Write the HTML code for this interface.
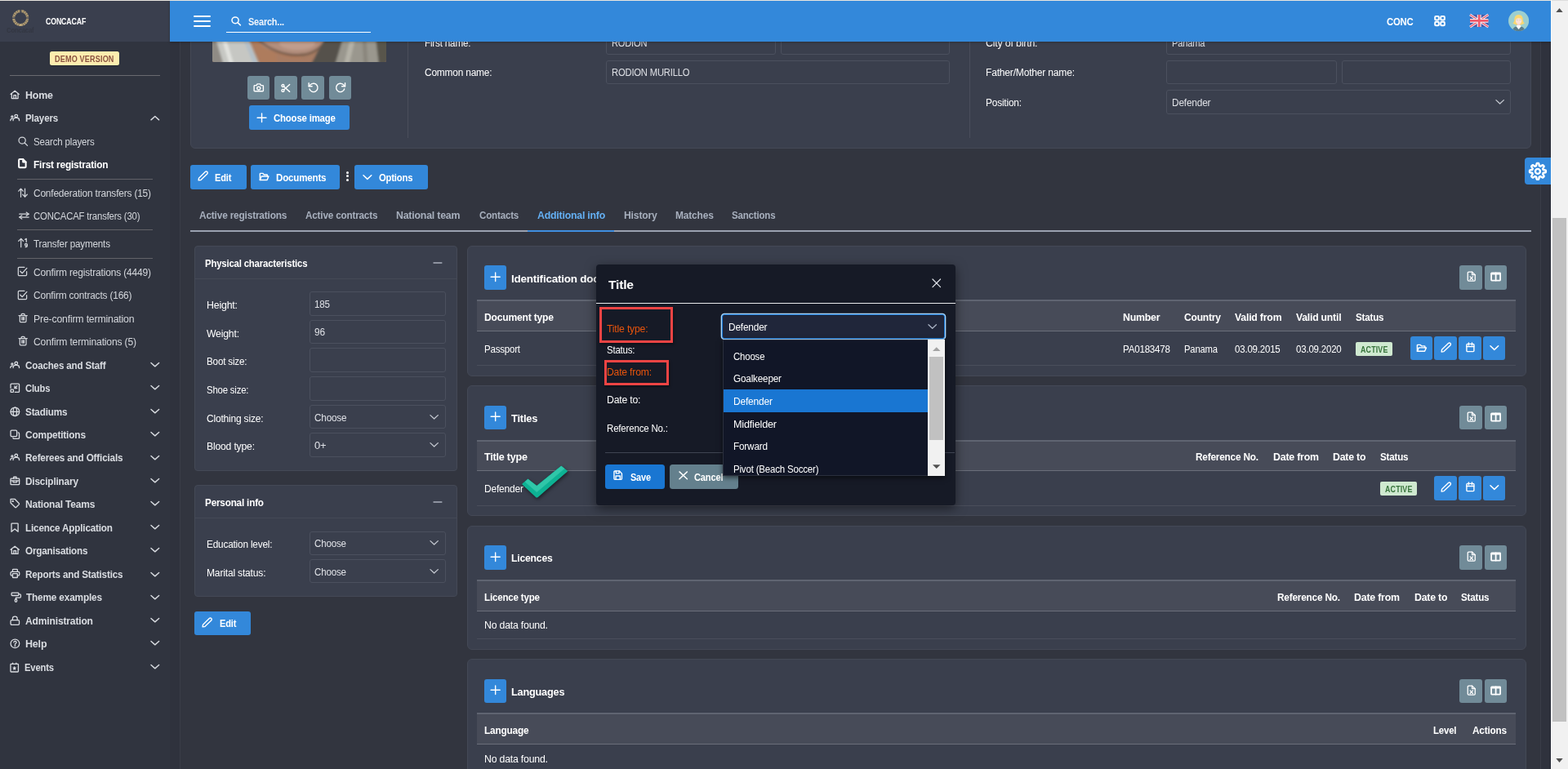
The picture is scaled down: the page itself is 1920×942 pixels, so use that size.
<!DOCTYPE html>
<html lang="en"><head><meta charset="utf-8"><title>COMET - Player</title>
<style>
html,body{margin:0;padding:0}
body{width:1920px;height:942px;overflow:hidden;position:relative;background:#32353f;font-family:"Liberation Sans",sans-serif;letter-spacing:-0.2px}
.b,.t,.i{position:absolute;display:block}
.b{box-sizing:border-box}
.t{white-space:pre;transform-origin:0 50%;margin:0;font-weight:400}
.i{overflow:visible}
.ns *{vector-effect:non-scaling-stroke}
</style></head>
<body>
<div class="b" style="left:0px;top:0px;width:1899px;height:942px;background:#32353f;">
</div>
<div class="b" style="left:208px;top:51px;width:12px;height:891px;background:#2f323d;">
</div>
<div class="b" style="left:220px;top:51px;width:1px;height:891px;background:#3a3d48;">
</div>
<div class="b" style="left:1886px;top:51px;width:1px;height:891px;background:#3a3d48;">
</div>
<div class="b" style="left:1887px;top:51px;width:12px;height:891px;background:#2f323d;">
</div>
<div class="b" style="left:1898px;top:51px;width:1px;height:891px;background:#262a36;">
</div>
<section>
<div class="b" style="left:233px;top:30px;width:1642px;height:152px;background:#3a3f4d;border-radius:6px;border:1px solid #444956;">
</div>
<svg class="i" style="left:260px;top:51px;border-radius:0 0 2px 2px;overflow:hidden" width="213" height="25" viewBox="0 0 213 25">
<defs>
<filter id="pb" x="-10%" y="-30%" width="120%" height="160%">
<feGaussianBlur stdDeviation="1.600"/>
</filter>
</defs>
<rect width="213" height="25" fill="#a67b61"/>
<g filter="url(#pb)">
<path d="M-4 -4H44L58 29H-4z" fill="#c6c7c3"/>
<path d="M-4 -4H4L14 29H-4z" fill="#8f8b85"/>
<path d="M14 -4l10 33" stroke="#e2e3df" stroke-width="5"/>
<path d="M40 -4l14 33" stroke="#b3bfc8" stroke-width="5"/>
<path d="M46 -4H80L120 29H60z" fill="#ae7b5d"/>
<ellipse cx="100" cy="-3" rx="43" ry="18" fill="#b28e7d"/>
<ellipse cx="104" cy="2" rx="22" ry="8" fill="#c09d8d"/>
<path d="M57 -2C70 10 88 17 105 16.500S130 10 140 -2" fill="none" stroke="#6f5748" stroke-width="3" opacity=".85"/>
<path d="M78 14C90 22 110 24 128 16L126 29H80z" fill="#a87c64"/>
<path d="M138 -4H166L152 29H120z" fill="#55514c"/>
<path d="M160 -4H200L206 29H150z" fill="#9a978e"/>
<path d="M172 -4l-8 33" stroke="#b5b2a8" stroke-width="6"/>
<path d="M186 -4l2 33" stroke="#8a867d" stroke-width="5"/>
<path d="M200 -4H218V29H204z" fill="#59544c"/>
</g>
</svg>
<div class="b" style="left:303px;top:93px;width:27px;height:29px;background:#718b98;border-radius:3px;">
</div>
<svg class="i ns" style="left:310.27px;top:101.27px;color:#fff;" width="13.56" height="12.56" viewBox="0 0 24 24" preserveAspectRatio="none" fill="none" stroke="#fff" stroke-width="1.4" stroke-linecap="round" stroke-linejoin="round">
<path d="M2 8.500A1.500 1.500 0 0 1 3.500 7h3.500l2-3.500h6L17 7h3.500A1.500 1.500 0 0 1 22 8.500V19a1.500 1.500 0 0 1-1.500 1.500h-17A1.500 1.500 0 0 1 2 19z"/>
<circle cx="12" cy="13.500" r="3.600"/>
</svg>
<div class="b" style="left:336px;top:93px;width:28px;height:29px;background:#718b98;border-radius:3px;">
</div>
<svg class="i ns" style="left:343.63px;top:101.62px;color:#fff;" width="11.64" height="11.87" viewBox="0 0 24 24" preserveAspectRatio="none" fill="none" stroke="#fff" stroke-width="1.4" stroke-linecap="round" stroke-linejoin="round">
<circle cx="5" cy="6" r="3"/>
<circle cx="5" cy="18" r="3"/>
<path d="M7.500 8 22 21"/>
<path d="M7.500 16 22 3"/>
</svg>
<div class="b" style="left:369px;top:93px;width:28px;height:29px;background:#718b98;border-radius:3px;">
</div>
<svg class="i ns" style="left:376.96px;top:100.16px;color:#fff;" width="13.7" height="13.9" viewBox="0 0 24 24" preserveAspectRatio="none" fill="none" stroke="#fff" stroke-width="1.4" stroke-linecap="round" stroke-linejoin="round">
<path d="M2 3v7h7"/>
<path d="M3.500 15.500A9 9 0 1 0 6 6.200L2 10"/>
</svg>
<div class="b" style="left:403px;top:93px;width:27px;height:29px;background:#718b98;border-radius:3px;">
</div>
<svg class="i ns" style="left:409.94px;top:100.16px;color:#fff;" width="13.7" height="13.9" viewBox="0 0 24 24" preserveAspectRatio="none" fill="none" stroke="#fff" stroke-width="1.4" stroke-linecap="round" stroke-linejoin="round">
<path d="M22 3v7h-7"/>
<path d="M20.500 15.500A9 9 0 1 1 18 6.200L22 10"/>
</svg>
<div class="b" style="left:305px;top:129px;width:123px;height:30px;background:#3388da;border-radius:3px;">
</div>
<svg class="i ns" style="left:314.11px;top:137.55px;color:#fff;" width="13.08" height="12.6" viewBox="0 0 24 24" preserveAspectRatio="none" fill="none" stroke="#fff" stroke-width="1.4" stroke-linecap="round" stroke-linejoin="round">
<path d="M12 2v20"/>
<path d="M2 12h20"/>
</svg>
<span class="t" style="left:334.8px;top:137px;font-size:12.5px;line-height:16px;color:#fff;transform:scaleX(0.9118);font-weight:700;">Choose image</span>
<div class="b" style="left:499px;top:51px;width:1px;height:117.5px;background:#4a4e5b;">
</div>
<div class="b" style="left:1187px;top:51px;width:1px;height:117.5px;background:#4a4e5b;">
</div>
<span class="t" style="left:519.8px;top:45px;font-size:12.5px;line-height:16px;color:#fff;transform:scaleX(0.9339);">First name:</span>
<div class="b" style="left:742px;top:37px;width:208px;height:30px;border-radius:3px;border:1px solid #4b505e;">
</div>
<span class="t" style="left:748.7px;top:45px;font-size:12.5px;line-height:16px;color:#dfe1e6;transform:scaleX(0.8873);">RODION</span>
<div class="b" style="left:956px;top:37px;width:207px;height:30px;border-radius:3px;border:1px solid #4b505e;">
</div>
<span class="t" style="left:519.8px;top:81px;font-size:12.5px;line-height:16px;color:#fff;transform:scaleX(0.9515);">Common name:</span>
<div class="b" style="left:742px;top:74px;width:421px;height:29px;border-radius:3px;border:1px solid #4b505e;">
</div>
<span class="t" style="left:748.7px;top:81px;font-size:12.5px;line-height:16px;color:#dfe1e6;transform:scaleX(0.8971);">RODION MURILLO</span>
<span class="t" style="left:1206.8px;top:45px;font-size:12.5px;line-height:16px;color:#fff;transform:scaleX(0.9915);">City of birth:</span>
<div class="b" style="left:1428px;top:37px;width:422px;height:30px;border-radius:3px;border:1px solid #4b505e;">
</div>
<span class="t" style="left:1434.7px;top:45px;font-size:12.5px;line-height:16px;color:#dfe1e6;transform:scaleX(0.8887);">Panama</span>
<span class="t" style="left:1206.8px;top:81px;font-size:12.5px;line-height:16px;color:#fff;transform:scaleX(0.9638);">Father/Mother name:</span>
<div class="b" style="left:1428px;top:74px;width:208.5px;height:29px;border-radius:3px;border:1px solid #4b505e;">
</div>
<div class="b" style="left:1643px;top:74px;width:207px;height:29px;border-radius:3px;border:1px solid #4b505e;">
</div>
<span class="t" style="left:1206.8px;top:118px;font-size:12.5px;line-height:16px;color:#fff;transform:scaleX(0.9497);">Position:</span>
<div class="b" style="left:1428px;top:110px;width:422px;height:30px;border-radius:3px;border:1px solid #4b505e;">
</div>
<span class="t" style="left:1434.7px;top:118px;font-size:12.5px;line-height:16px;color:#dfe1e6;transform:scaleX(0.9499);">Defender</span>
<svg class="i ns" style="left:1830.81px;top:120.11px;color:#c4c8d0;" width="11.28" height="10.56" viewBox="0 0 24 24" preserveAspectRatio="none" fill="none" stroke="#c4c8d0" stroke-width="1.3" stroke-linecap="round" stroke-linejoin="round">
<path d="M2 6l10 10L22 6"/>
</svg>
</section>
<div class="b" style="left:233px;top:202px;width:69px;height:30px;background:#3388da;border-radius:3px;">
</div>
<svg class="i ns" style="left:241.89px;top:209.21px;color:#fff;" width="13.33" height="12.97" viewBox="0 0 24 24" preserveAspectRatio="none" fill="none" stroke="#fff" stroke-width="1.4" stroke-linecap="round" stroke-linejoin="round">
<path d="M16.800 2.900a3 3 0 0 1 4.300 4.300L7 21.300l-5 .7.700-5z"/>
</svg>
<span class="t" style="left:263.3px;top:210px;font-size:12.5px;line-height:16px;color:#fff;transform:scaleX(0.8859);font-weight:700;">Edit</span>
<div class="b" style="left:307px;top:202px;width:109px;height:30px;background:#3388da;border-radius:3px;">
</div>
<svg class="i ns" style="left:316.78px;top:210.63px;color:#fff;" width="12.72" height="10.93" viewBox="0 0 24 24" preserveAspectRatio="none" fill="none" stroke="#fff" stroke-width="1.4" stroke-linecap="round" stroke-linejoin="round">
<path d="M2.500 21V4a1 1 0 0 1 1-1h5.500l3 3.500h6.500a1 1 0 0 1 1 1V11"/>
<path d="M2.500 21 6 11h16.500L19 21z"/>
</svg>
<span class="t" style="left:337.8px;top:210px;font-size:12.5px;line-height:16px;color:#fff;transform:scaleX(0.9252);font-weight:700;">Documents</span>
<div class="b" style="left:424px;top:209.5px;width:3px;height:3px;background:#fff;border-radius:2px;">
</div>
<div class="b" style="left:424px;top:214.2px;width:3px;height:3px;background:#fff;border-radius:2px;">
</div>
<div class="b" style="left:424px;top:218.9px;width:3px;height:3px;background:#fff;border-radius:2px;">
</div>
<div class="b" style="left:434px;top:202px;width:90px;height:30px;background:#3388da;border-radius:3px;">
</div>
<svg class="i ns" style="left:443.87px;top:211.69px;color:#fff;" width="11.76" height="11.04" viewBox="0 0 24 24" preserveAspectRatio="none" fill="none" stroke="#fff" stroke-width="1.5" stroke-linecap="round" stroke-linejoin="round">
<path d="M2 6l10 10L22 6"/>
</svg>
<span class="t" style="left:464px;top:210px;font-size:12.5px;line-height:16px;color:#fff;transform:scaleX(0.9015);font-weight:700;">Options</span>
<span class="t" style="left:244.1px;top:256px;font-size:12.5px;line-height:16px;color:#a7afbd;transform:scaleX(0.9513);font-weight:700;">Active registrations</span>
<span class="t" style="left:374.1px;top:256px;font-size:12.5px;line-height:16px;color:#a7afbd;transform:scaleX(0.9380);font-weight:700;">Active contracts</span>
<span class="t" style="left:485.3px;top:256px;font-size:12.5px;line-height:16px;color:#a7afbd;transform:scaleX(0.9858);font-weight:700;">National team</span>
<span class="t" style="left:586.8px;top:256px;font-size:12.5px;line-height:16px;color:#a7afbd;transform:scaleX(0.9274);font-weight:700;">Contacts</span>
<span class="t" style="left:657.6px;top:256px;font-size:12.5px;line-height:16px;color:#64b0f4;transform:scaleX(0.9830);font-weight:700;">Additional info</span>
<span class="t" style="left:763.6px;top:256px;font-size:12.5px;line-height:16px;color:#a7afbd;transform:scaleX(0.9753);font-weight:700;">History</span>
<span class="t" style="left:827.3px;top:256px;font-size:12.5px;line-height:16px;color:#a7afbd;transform:scaleX(0.9591);font-weight:700;">Matches</span>
<span class="t" style="left:896.4px;top:256px;font-size:12.5px;line-height:16px;color:#a7afbd;transform:scaleX(0.9221);font-weight:700;">Sanctions</span>
<div class="b" style="left:233px;top:282px;width:1642px;height:2px;background:#9aa1b0;">
</div>
<div class="b" style="left:646px;top:282px;width:105.5px;height:2px;background:#3f8fe0;">
</div>
<div class="b" style="left:1867px;top:193px;width:32px;height:33px;background:#3388da;border-radius:4px 0 0 4px;">
</div>
<svg class="i ns" style="left:1871.41px;top:197.52px;color:#fff;" width="23.88" height="23.76" viewBox="0 0 24 24" preserveAspectRatio="none" fill="none" stroke="#fff" stroke-width="2.4" stroke-linecap="round" stroke-linejoin="round">
<path d="M12.00 2.00L12.39 2.01L12.78 2.03L13.16 2.16L13.45 2.87L13.66 3.66L13.81 4.46L13.92 5.18L14.16 5.34L14.42 5.43L14.68 5.53L14.93 5.64L15.18 5.76L15.46 5.81L16.05 5.38L16.72 4.93L17.43 4.52L18.14 4.22L18.49 4.40L18.79 4.66L19.07 4.93L19.34 5.21L19.60 5.51L19.78 5.86L19.48 6.57L19.07 7.28L18.62 7.95L18.19 8.54L18.24 8.82L18.36 9.07L18.47 9.32L18.57 9.58L18.66 9.84L18.82 10.08L19.54 10.19L20.34 10.34L21.13 10.55L21.84 10.84L21.97 11.22L21.99 11.61L22.00 12.00L21.99 12.39L21.97 12.78L21.84 13.16L21.13 13.45L20.34 13.66L19.54 13.81L18.82 13.92L18.66 14.16L18.57 14.42L18.47 14.68L18.36 14.93L18.24 15.18L18.19 15.46L18.62 16.05L19.07 16.72L19.48 17.43L19.78 18.14L19.60 18.49L19.34 18.79L19.07 19.07L18.79 19.34L18.49 19.60L18.14 19.78L17.43 19.48L16.72 19.07L16.05 18.62L15.46 18.19L15.18 18.24L14.93 18.36L14.68 18.47L14.42 18.57L14.16 18.66L13.92 18.82L13.81 19.54L13.66 20.34L13.45 21.13L13.16 21.84L12.78 21.97L12.39 21.99L12.00 22.00L11.61 21.99L11.22 21.97L10.84 21.84L10.55 21.13L10.34 20.34L10.19 19.54L10.08 18.82L9.84 18.66L9.58 18.57L9.32 18.47L9.07 18.36L8.82 18.24L8.54 18.19L7.95 18.62L7.28 19.07L6.57 19.48L5.86 19.78L5.51 19.60L5.21 19.34L4.93 19.07L4.66 18.79L4.40 18.49L4.22 18.14L4.52 17.43L4.93 16.72L5.38 16.05L5.81 15.46L5.76 15.18L5.64 14.93L5.53 14.68L5.43 14.42L5.34 14.16L5.18 13.92L4.46 13.81L3.66 13.66L2.87 13.45L2.16 13.16L2.03 12.78L2.01 12.39L2.00 12.00L2.01 11.61L2.03 11.22L2.16 10.84L2.87 10.55L3.66 10.34L4.46 10.19L5.18 10.08L5.34 9.84L5.43 9.58L5.53 9.32L5.64 9.07L5.76 8.82L5.81 8.54L5.38 7.95L4.93 7.28L4.52 6.57L4.22 5.86L4.40 5.51L4.66 5.21L4.93 4.93L5.21 4.66L5.51 4.40L5.86 4.22L6.57 4.52L7.28 4.93L7.95 5.38L8.54 5.81L8.82 5.76L9.07 5.64L9.32 5.53L9.58 5.43L9.84 5.34L10.08 5.18L10.19 4.46L10.34 3.66L10.55 2.87L10.84 2.16L11.22 2.03L11.61 2.01z"/>
<circle cx="12" cy="12" r="3"/>
</svg>
<section>
<div class="b" style="left:238px;top:301px;width:322px;height:275.5px;background:#3a3f4d;border-radius:4px;border:1px solid #444956;">
</div>
<div class="b" style="left:239px;top:341px;width:320px;height:1px;background:#444956;">
</div>
<span class="t" style="left:251.1px;top:315px;font-size:12.5px;line-height:16px;color:#fff;transform:scaleX(0.9104);font-weight:700;">Physical characteristics</span>
<svg class="i ns" style="left:529.96px;top:310px;color:#aab0bc;" width="11.88" height="24" viewBox="0 0 24 24" preserveAspectRatio="none" fill="none" stroke="#aab0bc" stroke-width="1.3" stroke-linecap="round" stroke-linejoin="round">
<path d="M2 12h20"/>
</svg>
<span class="t" style="left:252.8px;top:366px;font-size:12.5px;line-height:16px;color:#fff;transform:scaleX(0.9903);">Height:</span>
<div class="b" style="left:378.5px;top:357px;width:167px;height:30px;border-radius:3px;border:1px solid #4b505e;">
</div>
<span class="t" style="left:385.2px;top:365px;font-size:12.5px;line-height:16px;color:#dfe1e6;transform:scaleX(0.9289);">185</span>
<span class="t" style="left:252.8px;top:401px;font-size:12.5px;line-height:16px;color:#fff;transform:scaleX(0.9773);">Weight:</span>
<div class="b" style="left:378.5px;top:392px;width:167px;height:29px;border-radius:3px;border:1px solid #4b505e;">
</div>
<span class="t" style="left:385.2px;top:399px;font-size:12.5px;line-height:16px;color:#dfe1e6;transform:scaleX(0.9494);">96</span>
<span class="t" style="left:252.8px;top:435px;font-size:12.5px;line-height:16px;color:#fff;transform:scaleX(0.9326);">Boot size:</span>
<div class="b" style="left:378.5px;top:426px;width:167px;height:30px;border-radius:3px;border:1px solid #4b505e;">
</div>
<span class="t" style="left:252.8px;top:470px;font-size:12.5px;line-height:16px;color:#fff;transform:scaleX(0.9103);">Shoe size:</span>
<div class="b" style="left:378.5px;top:461px;width:167px;height:30px;border-radius:3px;border:1px solid #4b505e;">
</div>
<span class="t" style="left:252.8px;top:505px;font-size:12.5px;line-height:16px;color:#fff;transform:scaleX(0.9597);">Clothing size:</span>
<div class="b" style="left:378.5px;top:496px;width:167px;height:29px;border-radius:3px;border:1px solid #4b505e;">
</div>
<span class="t" style="left:385.2px;top:504px;font-size:12.5px;line-height:16px;color:#dfe1e6;transform:scaleX(0.9388);">Choose</span>
<svg class="i ns" style="left:526.31px;top:505.61px;color:#c4c8d0;" width="11.28" height="10.56" viewBox="0 0 24 24" preserveAspectRatio="none" fill="none" stroke="#c4c8d0" stroke-width="1.3" stroke-linecap="round" stroke-linejoin="round">
<path d="M2 6l10 10L22 6"/>
</svg>
<span class="t" style="left:252.8px;top:539px;font-size:12.5px;line-height:16px;color:#fff;transform:scaleX(0.9751);">Blood type:</span>
<div class="b" style="left:378.5px;top:530px;width:167px;height:30px;border-radius:3px;border:1px solid #4b505e;">
</div>
<span class="t" style="left:385.2px;top:538px;font-size:12.5px;line-height:16px;color:#dfe1e6;transform:scaleX(1.0363);">0+</span>
<svg class="i ns" style="left:526.31px;top:540.11px;color:#c4c8d0;" width="11.28" height="10.56" viewBox="0 0 24 24" preserveAspectRatio="none" fill="none" stroke="#c4c8d0" stroke-width="1.3" stroke-linecap="round" stroke-linejoin="round">
<path d="M2 6l10 10L22 6"/>
</svg>
<div class="b" style="left:238px;top:594px;width:322px;height:137px;background:#3a3f4d;border-radius:4px;border:1px solid #444956;">
</div>
<div class="b" style="left:239px;top:634px;width:320px;height:1px;background:#444956;">
</div>
<span class="t" style="left:251.1px;top:608px;font-size:12.5px;line-height:16px;color:#fff;transform:scaleX(0.9378);font-weight:700;">Personal info</span>
<svg class="i ns" style="left:529.96px;top:603px;color:#aab0bc;" width="11.88" height="24" viewBox="0 0 24 24" preserveAspectRatio="none" fill="none" stroke="#aab0bc" stroke-width="1.3" stroke-linecap="round" stroke-linejoin="round">
<path d="M2 12h20"/>
</svg>
<span class="t" style="left:252.8px;top:659px;font-size:12.5px;line-height:16px;color:#fff;transform:scaleX(0.9444);">Education level:</span>
<div class="b" style="left:378.5px;top:650.5px;width:167px;height:29px;border-radius:3px;border:1px solid #4b505e;">
</div>
<span class="t" style="left:385.2px;top:658px;font-size:12.5px;line-height:16px;color:#dfe1e6;transform:scaleX(0.9268);">Choose</span>
<svg class="i ns" style="left:526.31px;top:660.11px;color:#c4c8d0;" width="11.28" height="10.56" viewBox="0 0 24 24" preserveAspectRatio="none" fill="none" stroke="#c4c8d0" stroke-width="1.3" stroke-linecap="round" stroke-linejoin="round">
<path d="M2 6l10 10L22 6"/>
</svg>
<span class="t" style="left:252.8px;top:694px;font-size:12.5px;line-height:16px;color:#fff;transform:scaleX(0.9669);">Marital status:</span>
<div class="b" style="left:378.5px;top:685px;width:167px;height:29px;border-radius:3px;border:1px solid #4b505e;">
</div>
<span class="t" style="left:385.2px;top:693px;font-size:12.5px;line-height:16px;color:#dfe1e6;transform:scaleX(0.9268);">Choose</span>
<svg class="i ns" style="left:526.31px;top:694.61px;color:#c4c8d0;" width="11.28" height="10.56" viewBox="0 0 24 24" preserveAspectRatio="none" fill="none" stroke="#c4c8d0" stroke-width="1.3" stroke-linecap="round" stroke-linejoin="round">
<path d="M2 6l10 10L22 6"/>
</svg>
<div class="b" style="left:238px;top:749px;width:69px;height:29px;background:#3388da;border-radius:3px;">
</div>
<svg class="i ns" style="left:247.39px;top:756.21px;color:#fff;" width="13.33" height="12.97" viewBox="0 0 24 24" preserveAspectRatio="none" fill="none" stroke="#fff" stroke-width="1.4" stroke-linecap="round" stroke-linejoin="round">
<path d="M16.800 2.900a3 3 0 0 1 4.300 4.300L7 21.300l-5 .7.700-5z"/>
</svg>
<span class="t" style="left:268.5px;top:756px;font-size:12.5px;line-height:16px;color:#fff;transform:scaleX(0.8859);font-weight:700;">Edit</span>
</section>
<section>
<div class="b" style="left:572px;top:301px;width:1297px;height:160px;background:#3a3f4d;border-radius:6px;border:1px solid #444956;">
</div>
<div class="b" style="left:593px;top:325px;width:27px;height:30px;background:#3388da;border-radius:3px;">
</div>
<svg class="i ns" style="left:599.89px;top:332.65px;color:#fff;" width="13.32" height="12.6" viewBox="0 0 24 24" preserveAspectRatio="none" fill="none" stroke="#fff" stroke-width="1.4" stroke-linecap="round" stroke-linejoin="round">
<path d="M12 2v20"/>
<path d="M2 12h20"/>
</svg>
<span class="t" style="left:625.8px;top:333px;font-size:13px;line-height:17px;color:#fff;transform:scaleX(1.0345);font-weight:700;">Identification documents</span>
<div class="b" style="left:1787px;top:325px;width:28px;height:30px;background:#718b98;border-radius:3px;">
</div>
<svg class="i ns" style="left:1794.7px;top:332.15px;color:#fff;" width="13.5" height="13.2" viewBox="0 0 24 24" preserveAspectRatio="none" fill="none" stroke="#fff" stroke-width="1.3" stroke-linecap="round" stroke-linejoin="round">
<path d="M13.500 2H6a2 2 0 0 0-2 2v16a2 2 0 0 0 2 2h12a2 2 0 0 0 2-2V8.500z"/>
<path d="M13.500 2v6.500H20"/>
<path d="M9 12.500l6 6.500"/>
<path d="M15 12.500 9 19"/>
</svg>
<div class="b" style="left:1818px;top:325px;width:27px;height:30px;background:#718b98;border-radius:3px;">
</div>
<svg class="i ns" style="left:1824.9px;top:333.38px;color:#fff;" width="13.2" height="12.13" viewBox="0 0 24 24" preserveAspectRatio="none" fill="none" stroke="#fff" stroke-width="1.8" stroke-linecap="round" stroke-linejoin="round">
<rect x="2" y="3" width="20" height="18" rx="1"/>
<path d="M12 3v18"/>
<path d="M2 5h20"/>
</svg>
<div class="b" style="left:584px;top:367px;width:1272px;height:39px;background:#474b58;border-top:2px solid #5f6471;border-bottom:1px solid #6a6e7a;">
</div>
<span class="t" style="left:593.3px;top:381px;font-size:12.5px;line-height:16px;color:#fff;transform:scaleX(0.9673);font-weight:700;">Document type</span>
<span class="t" style="left:1375.3px;top:381px;font-size:12.5px;line-height:16px;color:#fff;transform:scaleX(0.9851);font-weight:700;">Number</span>
<span class="t" style="left:1450px;top:381px;font-size:12.5px;line-height:16px;color:#fff;transform:scaleX(0.9639);font-weight:700;">Country</span>
<span class="t" style="left:1512px;top:381px;font-size:12.5px;line-height:16px;color:#fff;transform:scaleX(0.9813);font-weight:700;">Valid from</span>
<span class="t" style="left:1586.8px;top:381px;font-size:12.5px;line-height:16px;color:#fff;transform:scaleX(0.9736);font-weight:700;">Valid until</span>
<span class="t" style="left:1659.5px;top:381px;font-size:12.5px;line-height:16px;color:#fff;transform:scaleX(0.9273);font-weight:700;">Status</span>
<div class="b" style="left:584px;top:447px;width:1272px;height:1px;background:#4a4e5b;">
</div>
<span class="t" style="left:593.3px;top:420px;font-size:12.5px;line-height:16px;color:#fff;transform:scaleX(0.9180);">Passport</span>
<span class="t" style="left:1375.3px;top:420px;font-size:12.5px;line-height:16px;color:#fff;transform:scaleX(0.9233);">PA0183478</span>
<span class="t" style="left:1450.1px;top:420px;font-size:12.5px;line-height:16px;color:#fff;transform:scaleX(0.8998);">Panama</span>
<span class="t" style="left:1512px;top:420px;font-size:12.5px;line-height:16px;color:#fff;transform:scaleX(0.9168);">03.09.2015</span>
<span class="t" style="left:1586.8px;top:420px;font-size:12.5px;line-height:16px;color:#fff;transform:scaleX(0.9168);">03.09.2020</span>
<div class="b" style="left:1660px;top:419px;width:45px;height:17px;background:#cfe9d0;border-radius:2px;">
</div>
<span class="t" style="left:1665.8px;top:421px;font-size:10.5px;line-height:14px;color:#38743c;transform:scaleX(0.8449);font-weight:700;letter-spacing:0.2px;">ACTIVE</span>
<div class="b" style="left:1727px;top:412px;width:27px;height:29px;background:#3388da;border-radius:3px;">
</div>
<svg class="i ns" style="left:1733.61px;top:420.67px;color:#fff;" width="13.32" height="10.67" viewBox="0 0 24 24" preserveAspectRatio="none" fill="none" stroke="#fff" stroke-width="1.4" stroke-linecap="round" stroke-linejoin="round">
<path d="M2.500 21V4a1 1 0 0 1 1-1h5.500l3 3.500h6.500a1 1 0 0 1 1 1V11"/>
<path d="M2.500 21 6 11h16.500L19 21z"/>
</svg>
<div class="b" style="left:1756px;top:412px;width:28px;height:29px;background:#3388da;border-radius:3px;">
</div>
<svg class="i ns" style="left:1763.67px;top:419.1px;color:#fff;" width="13.57" height="13.09" viewBox="0 0 24 24" preserveAspectRatio="none" fill="none" stroke="#fff" stroke-width="1.4" stroke-linecap="round" stroke-linejoin="round">
<path d="M16.800 2.900a3 3 0 0 1 4.300 4.300L7 21.300l-5 .7.700-5z"/>
</svg>
<div class="b" style="left:1786px;top:412px;width:28px;height:29px;background:#3388da;border-radius:3px;">
</div>
<svg class="i ns" style="left:1795.1px;top:419.14px;color:#fff;" width="10.8" height="12.72" viewBox="0 0 24 24" preserveAspectRatio="none" fill="none" stroke="#fff" stroke-width="1.4" stroke-linecap="round" stroke-linejoin="round">
<rect x="2" y="4.500" width="20" height="17.500" rx="2"/>
<path d="M7.500 2v5"/>
<path d="M16.500 2v5"/>
<path d="M2 10.500h20"/>
</svg>
<div class="b" style="left:1816px;top:412px;width:27px;height:29px;background:#3388da;border-radius:3px;">
</div>
<svg class="i ns" style="left:1824.28px;top:421.49px;color:#fff;" width="11.64" height="11.04" viewBox="0 0 24 24" preserveAspectRatio="none" fill="none" stroke="#fff" stroke-width="1.5" stroke-linecap="round" stroke-linejoin="round">
<path d="M2 6l10 10L22 6"/>
</svg>
<div class="b" style="left:572px;top:472px;width:1297px;height:159.5px;background:#3a3f4d;border-radius:6px;border:1px solid #444956;">
</div>
<div class="b" style="left:593px;top:497px;width:27px;height:29px;background:#3388da;border-radius:3px;">
</div>
<svg class="i ns" style="left:599.89px;top:504.15px;color:#fff;" width="13.32" height="12.6" viewBox="0 0 24 24" preserveAspectRatio="none" fill="none" stroke="#fff" stroke-width="1.4" stroke-linecap="round" stroke-linejoin="round">
<path d="M12 2v20"/>
<path d="M2 12h20"/>
</svg>
<span class="t" style="left:625.8px;top:504px;font-size:13px;line-height:17px;color:#fff;transform:scaleX(0.9888);font-weight:700;">Titles</span>
<div class="b" style="left:1787px;top:497px;width:28px;height:29px;background:#718b98;border-radius:3px;">
</div>
<svg class="i ns" style="left:1794.7px;top:503.65px;color:#fff;" width="13.5" height="13.2" viewBox="0 0 24 24" preserveAspectRatio="none" fill="none" stroke="#fff" stroke-width="1.3" stroke-linecap="round" stroke-linejoin="round">
<path d="M13.500 2H6a2 2 0 0 0-2 2v16a2 2 0 0 0 2 2h12a2 2 0 0 0 2-2V8.500z"/>
<path d="M13.500 2v6.500H20"/>
<path d="M9 12.500l6 6.500"/>
<path d="M15 12.500 9 19"/>
</svg>
<div class="b" style="left:1818px;top:497px;width:27px;height:29px;background:#718b98;border-radius:3px;">
</div>
<svg class="i ns" style="left:1824.9px;top:504.88px;color:#fff;" width="13.2" height="12.13" viewBox="0 0 24 24" preserveAspectRatio="none" fill="none" stroke="#fff" stroke-width="1.8" stroke-linecap="round" stroke-linejoin="round">
<rect x="2" y="3" width="20" height="18" rx="1"/>
<path d="M12 3v18"/>
<path d="M2 5h20"/>
</svg>
<div class="b" style="left:584px;top:539px;width:1272px;height:38px;background:#474b58;border-top:2px solid #5f6471;border-bottom:1px solid #6a6e7a;">
</div>
<span class="t" style="left:593.3px;top:552px;font-size:12.5px;line-height:16px;color:#fff;transform:scaleX(1.0018);font-weight:700;">Title type</span>
<span class="t" style="left:1464px;top:552px;font-size:12.5px;line-height:16px;color:#fff;transform:scaleX(0.9431);font-weight:700;">Reference No.</span>
<span class="t" style="left:1558.8px;top:552px;font-size:12.5px;line-height:16px;color:#fff;transform:scaleX(0.9876);font-weight:700;">Date from</span>
<span class="t" style="left:1632px;top:552px;font-size:12.5px;line-height:16px;color:#fff;transform:scaleX(0.9848);font-weight:700;">Date to</span>
<span class="t" style="left:1689.5px;top:552px;font-size:12.5px;line-height:16px;color:#fff;transform:scaleX(0.9273);font-weight:700;">Status</span>
<div class="b" style="left:584px;top:619px;width:1272px;height:1px;background:#4a4e5b;">
</div>
<span class="t" style="left:593.3px;top:591px;font-size:12.5px;line-height:16px;color:#fff;transform:scaleX(0.9600);">Defender</span>
<div class="b" style="left:1690px;top:590px;width:45px;height:17px;background:#cfe9d0;border-radius:2px;">
</div>
<span class="t" style="left:1695.8px;top:592px;font-size:10.5px;line-height:14px;color:#38743c;transform:scaleX(0.8449);font-weight:700;letter-spacing:0.2px;">ACTIVE</span>
<div class="b" style="left:1756px;top:583px;width:28px;height:30px;background:#3388da;border-radius:3px;">
</div>
<svg class="i ns" style="left:1763.67px;top:590.1px;color:#fff;" width="13.57" height="13.09" viewBox="0 0 24 24" preserveAspectRatio="none" fill="none" stroke="#fff" stroke-width="1.4" stroke-linecap="round" stroke-linejoin="round">
<path d="M16.800 2.900a3 3 0 0 1 4.300 4.300L7 21.300l-5 .7.700-5z"/>
</svg>
<div class="b" style="left:1786px;top:583px;width:28px;height:30px;background:#3388da;border-radius:3px;">
</div>
<svg class="i ns" style="left:1795.1px;top:590.14px;color:#fff;" width="10.8" height="12.72" viewBox="0 0 24 24" preserveAspectRatio="none" fill="none" stroke="#fff" stroke-width="1.4" stroke-linecap="round" stroke-linejoin="round">
<rect x="2" y="4.500" width="20" height="17.500" rx="2"/>
<path d="M7.500 2v5"/>
<path d="M16.500 2v5"/>
<path d="M2 10.500h20"/>
</svg>
<div class="b" style="left:1816px;top:583px;width:27px;height:30px;background:#3388da;border-radius:3px;">
</div>
<svg class="i ns" style="left:1824.28px;top:592.49px;color:#fff;" width="11.64" height="11.04" viewBox="0 0 24 24" preserveAspectRatio="none" fill="none" stroke="#fff" stroke-width="1.5" stroke-linecap="round" stroke-linejoin="round">
<path d="M2 6l10 10L22 6"/>
</svg>
<svg class="i" style="left:630px;top:560px;filter:drop-shadow(1.500px 2.500px 2px rgba(0,0,0,.5))" width="80" height="60" viewBox="630 560 80 60">
<path d="M640.300 593 646.500 587.700 657.300 596 687.200 571.600 694 577.100 658.200 608.200Q657.300 608.900 656.400 608.200z" fill="#0eb294" stroke="#0eb294" stroke-width="1.800" stroke-linejoin="round"/>
<path d="M646.500 587.300 657.300 595.800 687.200 571.300 690.800 574.100 657.300 602.600 643.200 590.200z" fill="#30c6a9" stroke="#30c6a9" stroke-width=".8" stroke-linejoin="round"/>
</svg>
<div class="b" style="left:572px;top:644px;width:1297px;height:151.5px;background:#3a3f4d;border-radius:6px;border:1px solid #444956;">
</div>
<div class="b" style="left:593px;top:668px;width:27px;height:30px;background:#3388da;border-radius:3px;">
</div>
<svg class="i ns" style="left:599.89px;top:675.65px;color:#fff;" width="13.32" height="12.6" viewBox="0 0 24 24" preserveAspectRatio="none" fill="none" stroke="#fff" stroke-width="1.4" stroke-linecap="round" stroke-linejoin="round">
<path d="M12 2v20"/>
<path d="M2 12h20"/>
</svg>
<span class="t" style="left:625.8px;top:675px;font-size:13px;line-height:17px;color:#fff;transform:scaleX(0.9353);font-weight:700;">Licences</span>
<div class="b" style="left:1787px;top:668px;width:28px;height:30px;background:#718b98;border-radius:3px;">
</div>
<svg class="i ns" style="left:1794.7px;top:675.15px;color:#fff;" width="13.5" height="13.2" viewBox="0 0 24 24" preserveAspectRatio="none" fill="none" stroke="#fff" stroke-width="1.3" stroke-linecap="round" stroke-linejoin="round">
<path d="M13.500 2H6a2 2 0 0 0-2 2v16a2 2 0 0 0 2 2h12a2 2 0 0 0 2-2V8.500z"/>
<path d="M13.500 2v6.500H20"/>
<path d="M9 12.500l6 6.500"/>
<path d="M15 12.500 9 19"/>
</svg>
<div class="b" style="left:1818px;top:668px;width:27px;height:30px;background:#718b98;border-radius:3px;">
</div>
<svg class="i ns" style="left:1824.9px;top:676.38px;color:#fff;" width="13.2" height="12.13" viewBox="0 0 24 24" preserveAspectRatio="none" fill="none" stroke="#fff" stroke-width="1.8" stroke-linecap="round" stroke-linejoin="round">
<rect x="2" y="3" width="20" height="18" rx="1"/>
<path d="M12 3v18"/>
<path d="M2 5h20"/>
</svg>
<div class="b" style="left:584px;top:710px;width:1272px;height:39px;background:#474b58;border-top:2px solid #5f6471;border-bottom:1px solid #6a6e7a;">
</div>
<span class="t" style="left:593.3px;top:724px;font-size:12.5px;line-height:16px;color:#fff;transform:scaleX(0.9249);font-weight:700;">Licence type</span>
<span class="t" style="left:1563.5px;top:724px;font-size:12.5px;line-height:16px;color:#fff;transform:scaleX(0.9431);font-weight:700;">Reference No.</span>
<span class="t" style="left:1658.1px;top:724px;font-size:12.5px;line-height:16px;color:#fff;transform:scaleX(0.9876);font-weight:700;">Date from</span>
<span class="t" style="left:1731.5px;top:724px;font-size:12.5px;line-height:16px;color:#fff;transform:scaleX(0.9848);font-weight:700;">Date to</span>
<span class="t" style="left:1789.3px;top:724px;font-size:12.5px;line-height:16px;color:#fff;transform:scaleX(0.9273);font-weight:700;">Status</span>
<div class="b" style="left:584px;top:782px;width:1272px;height:1px;background:#4a4e5b;">
</div>
<span class="t" style="left:593.3px;top:758px;font-size:12.5px;line-height:16px;color:#fff;transform:scaleX(0.9826);">No data found.</span>
<div class="b" style="left:572px;top:807px;width:1297px;height:163px;background:#3a3f4d;border-radius:6px;border:1px solid #444956;">
</div>
<div class="b" style="left:593px;top:832px;width:27px;height:29px;background:#3388da;border-radius:3px;">
</div>
<svg class="i ns" style="left:599.89px;top:839.15px;color:#fff;" width="13.32" height="12.6" viewBox="0 0 24 24" preserveAspectRatio="none" fill="none" stroke="#fff" stroke-width="1.4" stroke-linecap="round" stroke-linejoin="round">
<path d="M12 2v20"/>
<path d="M2 12h20"/>
</svg>
<span class="t" style="left:625.8px;top:839px;font-size:13px;line-height:17px;color:#fff;transform:scaleX(0.9766);font-weight:700;">Languages</span>
<div class="b" style="left:1787px;top:832px;width:28px;height:29px;background:#718b98;border-radius:3px;">
</div>
<svg class="i ns" style="left:1794.7px;top:838.65px;color:#fff;" width="13.5" height="13.2" viewBox="0 0 24 24" preserveAspectRatio="none" fill="none" stroke="#fff" stroke-width="1.3" stroke-linecap="round" stroke-linejoin="round">
<path d="M13.500 2H6a2 2 0 0 0-2 2v16a2 2 0 0 0 2 2h12a2 2 0 0 0 2-2V8.500z"/>
<path d="M13.500 2v6.500H20"/>
<path d="M9 12.500l6 6.500"/>
<path d="M15 12.500 9 19"/>
</svg>
<div class="b" style="left:1818px;top:832px;width:27px;height:29px;background:#718b98;border-radius:3px;">
</div>
<svg class="i ns" style="left:1824.9px;top:839.88px;color:#fff;" width="13.2" height="12.13" viewBox="0 0 24 24" preserveAspectRatio="none" fill="none" stroke="#fff" stroke-width="1.8" stroke-linecap="round" stroke-linejoin="round">
<rect x="2" y="3" width="20" height="18" rx="1"/>
<path d="M12 3v18"/>
<path d="M2 5h20"/>
</svg>
<div class="b" style="left:584px;top:873px;width:1272px;height:39px;background:#474b58;border-top:2px solid #5f6471;border-bottom:1px solid #6a6e7a;">
</div>
<span class="t" style="left:593.3px;top:887px;font-size:12.5px;line-height:16px;color:#fff;transform:scaleX(0.9459);font-weight:700;">Language</span>
<span class="t" style="left:1755.1px;top:887px;font-size:12.5px;line-height:16px;color:#fff;transform:scaleX(0.9145);font-weight:700;">Level</span>
<span class="t" style="left:1803.3px;top:887px;font-size:12.5px;line-height:16px;color:#fff;transform:scaleX(0.9413);font-weight:700;">Actions</span>
<span class="t" style="left:593.3px;top:922px;font-size:12.5px;line-height:16px;color:#fff;transform:scaleX(0.9826);">No data found.</span>
</section>
<section>
<div class="b" style="left:730px;top:324px;width:440px;height:294.5px;background:#161a26;border-radius:4px;box-shadow:0 4px 14px rgba(0,0,0,.5);">
</div>
<span class="t" style="left:745.3px;top:339px;font-size:15px;line-height:19px;color:#fff;transform:scaleX(1.0406);font-weight:700;">Title</span>
<svg class="i ns" style="left:1140.64px;top:340.94px;color:#e3e6ec;" width="11.52" height="11.52" viewBox="0 0 24 24" preserveAspectRatio="none" fill="none" stroke="#e3e6ec" stroke-width="1.2" stroke-linecap="round" stroke-linejoin="round">
<path d="M2 2l20 20"/>
<path d="M22 2 2 22"/>
</svg>
<div class="b" style="left:730px;top:371px;width:440px;height:1px;background:#e9eaec;">
</div>
<span class="t" style="left:742.8px;top:395px;font-size:12.5px;line-height:16px;color:#e8540c;transform:scaleX(0.9789);">Title type:</span>
<span class="t" style="left:742.8px;top:421px;font-size:12.5px;line-height:16px;color:#fff;transform:scaleX(0.9148);">Status:</span>
<span class="t" style="left:742.8px;top:448px;font-size:12.5px;line-height:16px;color:#e8540c;transform:scaleX(0.9731);">Date from:</span>
<span class="t" style="left:742.8px;top:482px;font-size:12.5px;line-height:16px;color:#fff;transform:scaleX(0.9800);">Date to:</span>
<span class="t" style="left:742.8px;top:517px;font-size:12.5px;line-height:16px;color:#fff;transform:scaleX(0.9205);">Reference No.:</span>
<div class="b" style="left:734px;top:376px;width:90px;height:43.5px;border:3px solid #ee4444;box-shadow:1px 2px 3px rgba(0,0,0,.4);">
</div>
<div class="b" style="left:740px;top:440.5px;width:79px;height:31px;border:3px solid #ee4444;box-shadow:1px 2px 3px rgba(0,0,0,.4);">
</div>
<div class="b" style="left:741px;top:554px;width:428px;height:1px;background:#3f4452;">
</div>
<div class="b" style="left:741px;top:569px;width:73px;height:30px;background:#1976d2;border-radius:3.5px;">
</div>
<svg class="i ns" style="left:751.45px;top:576.47px;color:#fff;" width="11.4" height="12.36" viewBox="0 0 24 24" preserveAspectRatio="none" fill="none" stroke="#fff" stroke-width="1.4" stroke-linecap="round" stroke-linejoin="round">
<path d="M4 2h12l6 6v12a2 2 0 0 1-2 2H4a2 2 0 0 1-2-2V4a2 2 0 0 1 2-2z"/>
<path d="M7 2v5.500h8V2"/>
<path d="M6.500 22v-8.500h11V22"/>
</svg>
<span class="t" style="left:771.5px;top:577px;font-size:12.5px;line-height:16px;color:#fff;transform:scaleX(0.8732);font-weight:700;">Save</span>
<div class="b" style="left:820px;top:569px;width:84px;height:30px;background:#64808d;border-radius:3.5px;">
</div>
<svg class="i ns" style="left:830.65px;top:577.42px;color:#fff;" width="11.4" height="10.56" viewBox="0 0 24 24" preserveAspectRatio="none" fill="none" stroke="#fff" stroke-width="1.4" stroke-linecap="round" stroke-linejoin="round">
<path d="M2 2l20 20"/>
<path d="M22 2 2 22"/>
</svg>
<span class="t" style="left:850.2px;top:577px;font-size:12.5px;line-height:16px;color:#fff;transform:scaleX(0.8873);font-weight:700;">Cancel</span>
<div class="b" style="left:884px;top:384.5px;width:273px;height:30px;background:#20263a;border-radius:3px;border:1.5px solid #1976d2;box-shadow:0 0 0 1.300px #a9d6fa;">
</div>
<span class="t" style="left:892.1px;top:393px;font-size:12.5px;line-height:16px;color:#fff;transform:scaleX(0.9499);">Defender</span>
<svg class="i ns" style="left:1135.9px;top:394.95px;color:#a9b2c3;" width="11.4" height="10.8" viewBox="0 0 24 24" preserveAspectRatio="none" fill="none" stroke="#a9b2c3" stroke-width="1.3" stroke-linecap="round" stroke-linejoin="round">
<path d="M2 6l10 10L22 6"/>
</svg>
<div class="b" style="left:885px;top:416px;width:272px;height:167px;background:#111627;box-shadow:0 2px 6px rgba(0,0,0,.6);border:1px solid #2a2f3d;">
</div>
<div class="b" style="left:886px;top:476.7px;width:250px;height:28px;background:#1976d2;">
</div>
<span class="t" style="left:897.6px;top:429px;font-size:12.5px;line-height:16px;color:#fff;transform:scaleX(0.9148);">Choose</span>
<span class="t" style="left:897.6px;top:456px;font-size:12.5px;line-height:16px;color:#fff;transform:scaleX(0.9394);">Goalkeeper</span>
<span class="t" style="left:897.6px;top:484px;font-size:12.5px;line-height:16px;color:#fff;transform:scaleX(0.9600);">Defender</span>
<span class="t" style="left:897.6px;top:512px;font-size:12.5px;line-height:16px;color:#fff;transform:scaleX(1.0128);">Midfielder</span>
<span class="t" style="left:897.6px;top:539px;font-size:12.5px;line-height:16px;color:#fff;transform:scaleX(0.9410);">Forward</span>
<span class="t" style="left:897.6px;top:567px;font-size:12.5px;line-height:16px;color:#fff;transform:scaleX(0.9198);">Pivot (Beach Soccer)</span>
<div class="b" style="left:1136px;top:416px;width:21px;height:167px;background:#f1f1f1;">
</div>
<div class="b" style="left:1138px;top:437px;width:17px;height:101.5px;background:#c1c1c1;">
</div>
<svg class="i" style="left:1142px;top:425px" width="9.5" height="5" viewBox="0 0 10 5">
<path d="M0 5 5 0l5 5z" fill="#a3a3a3"/>
</svg>
<svg class="i" style="left:1142px;top:568.5px" width="9.5" height="5" viewBox="0 0 10 5">
<path d="M0 0 5 5l5-5z" fill="#505050"/>
</svg>
</section>
<nav>
<div class="b" style="left:0px;top:1px;width:208px;height:50px;background:#3a3f4e;">
</div>
<div class="b" style="left:0px;top:51px;width:208px;height:891px;background:#30343f;">
</div>
<svg class="i" style="left:13px;top:10px" width="24" height="24" viewBox="0 0 24 24" fill="none">
<defs>
<filter id="lg" x="-20%" y="-20%" width="140%" height="140%">
<feGaussianBlur stdDeviation=".450"/>
</filter>
</defs>
<g filter="url(#lg)">
<circle cx="12.200" cy="12" r="8.500" stroke="#c8ad78" stroke-width="3.200" stroke-dasharray="2.200 .4" opacity=".82"/>
<path d="M12.200 1v4.500M1 12.200h5M18.500 12.200h5" stroke="#3a3f4e" stroke-width="1.300"/>
<path d="M10.500 21.500l1.700-2 1.700 2z" fill="#d9bf88"/>
</g>
</svg>
<span class="t" style="left:8.2px;top:31px;font-size:8.5px;line-height:12px;color:#333742;transform:scaleX(0.9124);font-weight:700;">Concacaf</span>
<span class="t" style="left:55.5px;top:19px;font-size:10.5px;line-height:14px;color:#fff;transform:scaleX(0.8399);font-weight:700;">CONCACAF</span>
<div class="b" style="left:61px;top:63px;width:85px;height:17px;background:#feedaf;border-radius:2.5px;box-shadow:0 1px 1px rgba(0,0,0,.3);">
</div>
<span class="t" style="left:67.3px;top:65px;font-size:10.5px;line-height:14px;color:#8a5340;transform:scaleX(0.8631);font-weight:700;letter-spacing:0.2px;">DEMO VERSION</span>
<div class="b" style="left:12px;top:92px;width:184px;height:1px;background:#696a70;">
</div>
<svg class="i ns" style="left:11.82px;top:109.61px;color:#d9dce1;" width="12.36" height="11.87" viewBox="0 0 24 24" preserveAspectRatio="none" fill="none" stroke="#d9dce1" stroke-width="1.3" stroke-linecap="round" stroke-linejoin="round">
<path d="M2 11 12 2.500 22 11"/>
<path d="M4.500 9v12.500h15V9"/>
<path d="M9.500 21.500v-8h5v8"/>
</svg>
<span class="t" style="left:30.9px;top:109px;font-size:12.5px;line-height:16px;color:#d9dce1;transform:scaleX(0.9944);font-weight:700;">Home</span>
<svg class="i ns" style="left:11.93px;top:138.57px;color:#d9dce1;" width="13.1" height="12.25" viewBox="0 0 24 24" preserveAspectRatio="none" fill="none" stroke="#d9dce1" stroke-width="1.3" stroke-linecap="round" stroke-linejoin="round">
<circle cx="14.300" cy="5.800" r="3.300"/>
<path d="M7.500 17v-1.300a5.200 5.200 0 0 1 5.200-5.200h3.200a5.200 5.200 0 0 1 5.200 5.200V17"/>
<circle cx="5.300" cy="7.700" r="1.900"/>
<path d="M1.500 17v-.800a4 4 0 0 1 4-4h.500"/>
</svg>
<span class="t" style="left:30.9px;top:137px;font-size:12.5px;line-height:16px;color:#d9dce1;transform:scaleX(0.9288);font-weight:700;">Players</span>
<svg class="i ns" style="left:184.33px;top:140.42px;color:#d9dce1;" width="11.64" height="10.32" viewBox="0 0 24 24" preserveAspectRatio="none" fill="none" stroke="#d9dce1" stroke-width="1.4" stroke-linecap="round" stroke-linejoin="round">
<path d="M2 16 12 6l10 10"/>
</svg>
<svg class="i ns" style="left:21.8px;top:166.72px;color:#d3d6db;" width="12.35" height="12.12" viewBox="0 0 24 24" preserveAspectRatio="none" fill="none" stroke="#d3d6db" stroke-width="1.25" stroke-linecap="round" stroke-linejoin="round">
<circle cx="10" cy="10" r="8"/>
<path d="M15.800 15.800 22.500 22.500"/>
</svg>
<span class="t" style="left:41px;top:166px;font-size:12.5px;line-height:16px;color:#d3d6db;transform:scaleX(0.9249);">Search players</span>
<svg class="i ns" style="left:21.38px;top:194.47px;color:#fff;" width="12.75" height="12.36" viewBox="0 0 24 24" preserveAspectRatio="none" fill="none" stroke="#fff" stroke-width="2" stroke-linecap="round" stroke-linejoin="round">
<path d="M13.500 2H6a2 2 0 0 0-2 2v16a2 2 0 0 0 2 2h12a2 2 0 0 0 2-2V8.500z"/>
<path d="M13.500 2v6.500H20"/>
</svg>
<span class="t" style="left:41px;top:194px;font-size:12.5px;line-height:16px;color:#fff;transform:scaleX(0.9540);font-weight:700;">First registration</span>
<svg class="i ns" style="left:22.07px;top:229.69px;color:#d3d6db;" width="12.06" height="12.42" viewBox="0 0 24 24" preserveAspectRatio="none" fill="none" stroke="#d3d6db" stroke-width="1.25" stroke-linecap="round" stroke-linejoin="round">
<path d="M7 22V2.500"/>
<path d="M1.500 8 7 2.500 12.500 8"/>
<path d="M17 2v19.500"/>
<path d="M11.500 16 17 21.500 22.500 16"/>
</svg>
<span class="t" style="left:41px;top:229px;font-size:12.5px;line-height:16px;color:#d3d6db;transform:scaleX(0.9542);">Confederation transfers (15)</span>
<svg class="i ns" style="left:23.11px;top:259.45px;color:#d3d6db;" width="12.97" height="10.29" viewBox="0 0 24 24" preserveAspectRatio="none" fill="none" stroke="#d3d6db" stroke-width="1.25" stroke-linecap="round" stroke-linejoin="round">
<path d="M1.500 7.500h21"/>
<path d="M17 2.500l5.500 5-5.500 5"/>
<path d="M22.500 16.500h-21"/>
<path d="M7 11.500l-5.500 5 5.500 5"/>
</svg>
<span class="t" style="left:41px;top:257px;font-size:12.5px;line-height:16px;color:#d3d6db;transform:scaleX(0.9091);">CONCACAF transfers (30)</span>
<svg class="i ns" style="left:22.03px;top:291.4px;color:#d3d6db;" width="12.66" height="12.74" viewBox="0 0 24 24" preserveAspectRatio="none" fill="none" stroke="#d3d6db" stroke-width="1.25" stroke-linecap="round" stroke-linejoin="round">
<path d="M7 22V2.500"/>
<path d="M1.500 8 7 2.500 12.500 8"/>
<path d="M16.500 4.500 19.500 2.500v7.500"/>
<circle cx="18.800" cy="16.500" r="2.700"/>
<path d="M21.500 16.500v2.500a3 3 0 0 1-3 3h-1"/>
</svg>
<span class="t" style="left:41px;top:291px;font-size:12.5px;line-height:16px;color:#d3d6db;transform:scaleX(0.9351);">Transfer payments</span>
<svg class="i ns" style="left:21.47px;top:326.46px;color:#d3d6db;" width="12.98" height="13.07" viewBox="0 0 24 24" preserveAspectRatio="none" fill="none" stroke="#d3d6db" stroke-width="1.25" stroke-linecap="round" stroke-linejoin="round">
<path d="M21.500 12v7.500a2 2 0 0 1-2 2h-15a2 2 0 0 1-2-2v-15a2 2 0 0 1 2-2h12"/>
<path d="M7 11.500l4.500 4.500L22 4.500"/>
</svg>
<span class="t" style="left:41px;top:326px;font-size:12.5px;line-height:16px;color:#d3d6db;transform:scaleX(0.9632);">Confirm registrations (4449)</span>
<svg class="i ns" style="left:21.47px;top:354.66px;color:#d3d6db;" width="12.98" height="13.07" viewBox="0 0 24 24" preserveAspectRatio="none" fill="none" stroke="#d3d6db" stroke-width="1.25" stroke-linecap="round" stroke-linejoin="round">
<path d="M21.500 12v7.500a2 2 0 0 1-2 2h-15a2 2 0 0 1-2-2v-15a2 2 0 0 1 2-2h12"/>
<path d="M7 11.500l4.500 4.500L22 4.500"/>
</svg>
<span class="t" style="left:41px;top:354px;font-size:12.5px;line-height:16px;color:#d3d6db;transform:scaleX(0.9550);">Confirm contracts (166)</span>
<svg class="i ns" style="left:21.9px;top:383.36px;color:#d3d6db;" width="12.3" height="13.07" viewBox="0 0 24 24" preserveAspectRatio="none" fill="none" stroke="#d3d6db" stroke-width="1.25" stroke-linecap="round" stroke-linejoin="round">
<path d="M2 6.500h20"/>
<path d="M8 6.500v-2a2 2 0 0 1 2-2h4a2 2 0 0 1 2 2v2"/>
<path d="M4.500 6.500v13a2 2 0 0 0 2 2h11a2 2 0 0 0 2-2v-13"/>
<path d="M9.500 10.500v6"/>
<path d="M12 10.500v6"/>
<path d="M14.500 10.500v6"/>
</svg>
<span class="t" style="left:41px;top:383px;font-size:12.5px;line-height:16px;color:#d3d6db;transform:scaleX(0.9843);">Pre-confirm termination</span>
<svg class="i ns" style="left:21.9px;top:411.24px;color:#d3d6db;" width="12.3" height="13.33" viewBox="0 0 24 24" preserveAspectRatio="none" fill="none" stroke="#d3d6db" stroke-width="1.25" stroke-linecap="round" stroke-linejoin="round">
<path d="M2 6.500h20"/>
<path d="M8 6.500v-2a2 2 0 0 1 2-2h4a2 2 0 0 1 2 2v2"/>
<path d="M4.500 6.500v13a2 2 0 0 0 2 2h11a2 2 0 0 0 2-2v-13"/>
<path d="M9.500 10.500v6"/>
<path d="M12 10.500v6"/>
<path d="M14.500 10.500v6"/>
</svg>
<span class="t" style="left:41px;top:411px;font-size:12.5px;line-height:16px;color:#d3d6db;transform:scaleX(0.9735);">Confirm terminations (5)</span>
<div class="b" style="left:21px;top:219px;width:165.5px;height:1px;background:#626268;">
</div>
<div class="b" style="left:21px;top:281px;width:165.5px;height:1px;background:#626268;">
</div>
<div class="b" style="left:21px;top:316px;width:165.5px;height:1px;background:#626268;">
</div>
<svg class="i ns" style="left:11.93px;top:441.79px;color:#d9dce1;" width="13.1" height="12.08" viewBox="0 0 24 24" preserveAspectRatio="none" fill="none" stroke="#d9dce1" stroke-width="1.3" stroke-linecap="round" stroke-linejoin="round">
<circle cx="14.300" cy="5.800" r="3.300"/>
<path d="M7.500 17v-1.300a5.200 5.200 0 0 1 5.200-5.200h3.200a5.200 5.200 0 0 1 5.200 5.200V17"/>
<circle cx="5.300" cy="7.700" r="1.900"/>
<path d="M1.500 17v-.800a4 4 0 0 1 4-4h.500"/>
</svg>
<span class="t" style="left:30.9px;top:440px;font-size:12.5px;line-height:16px;color:#d9dce1;transform:scaleX(0.9306);font-weight:700;">Coaches and Staff</span>
<svg class="i ns" style="left:184.43px;top:442.22px;color:#d9dce1;" width="11.64" height="10.32" viewBox="0 0 24 24" preserveAspectRatio="none" fill="none" stroke="#d9dce1" stroke-width="1.4" stroke-linecap="round" stroke-linejoin="round">
<path d="M2 6l10 10L22 6"/>
</svg>
<svg class="i ns" style="left:11.8px;top:468.71px;color:#d9dce1;" width="12.6" height="12.48" viewBox="0 0 24 24" preserveAspectRatio="none" fill="none" stroke="#d9dce1" stroke-width="1.3" stroke-linecap="round" stroke-linejoin="round">
<path d="M2 12V4a2 2 0 0 1 2-2h16a2 2 0 0 1 2 2v16a2 2 0 0 1-2 2h-8"/>
<path d="M17 7l-5.500 5.500"/>
<path d="M11.500 7.500v5h5"/>
<rect x="2" y="15.500" width="6.500" height="6.500" rx="1.500"/>
</svg>
<span class="t" style="left:30.9px;top:468px;font-size:12.5px;line-height:16px;color:#d9dce1;transform:scaleX(0.8986);font-weight:700;">Clubs</span>
<svg class="i ns" style="left:184.43px;top:470.32px;color:#d9dce1;" width="11.64" height="10.32" viewBox="0 0 24 24" preserveAspectRatio="none" fill="none" stroke="#d9dce1" stroke-width="1.4" stroke-linecap="round" stroke-linejoin="round">
<path d="M2 6l10 10L22 6"/>
</svg>
<svg class="i ns" style="left:11.69px;top:497.5px;color:#d9dce1;" width="12.72" height="12.6" viewBox="0 0 24 24" preserveAspectRatio="none" fill="none" stroke="#d9dce1" stroke-width="1.3" stroke-linecap="round" stroke-linejoin="round">
<circle cx="12" cy="12" r="10"/>
<path d="M2 12h20"/>
<ellipse cx="12" cy="12" rx="4.200" ry="10"/>
</svg>
<span class="t" style="left:30.9px;top:497px;font-size:12.5px;line-height:16px;color:#d9dce1;transform:scaleX(0.9388);font-weight:700;">Stadiums</span>
<svg class="i ns" style="left:184.43px;top:499.22px;color:#d9dce1;" width="11.64" height="10.32" viewBox="0 0 24 24" preserveAspectRatio="none" fill="none" stroke="#d9dce1" stroke-width="1.4" stroke-linecap="round" stroke-linejoin="round">
<path d="M2 6l10 10L22 6"/>
</svg>
<svg class="i ns" style="left:11.8px;top:525.71px;color:#d9dce1;" width="12.6" height="12.48" viewBox="0 0 24 24" preserveAspectRatio="none" fill="none" stroke="#d9dce1" stroke-width="1.3" stroke-linecap="round" stroke-linejoin="round">
<rect x="2" y="2" width="14.500" height="14.500" rx="2.500"/>
<path d="M19.500 7.500a2.500 2.500 0 0 1 2.500 2.500v9.500a2.500 2.500 0 0 1-2.500 2.500H10a2.500 2.500 0 0 1-2.500-2.500"/>
</svg>
<span class="t" style="left:30.9px;top:525px;font-size:12.5px;line-height:16px;color:#d9dce1;transform:scaleX(0.9531);font-weight:700;">Competitions</span>
<svg class="i ns" style="left:184.43px;top:527.32px;color:#d9dce1;" width="11.64" height="10.32" viewBox="0 0 24 24" preserveAspectRatio="none" fill="none" stroke="#d9dce1" stroke-width="1.4" stroke-linecap="round" stroke-linejoin="round">
<path d="M2 6l10 10L22 6"/>
</svg>
<svg class="i ns" style="left:11.93px;top:555.29px;color:#d9dce1;" width="13.1" height="12.08" viewBox="0 0 24 24" preserveAspectRatio="none" fill="none" stroke="#d9dce1" stroke-width="1.3" stroke-linecap="round" stroke-linejoin="round">
<circle cx="14.300" cy="5.800" r="3.300"/>
<path d="M7.500 17v-1.300a5.200 5.200 0 0 1 5.200-5.200h3.200a5.200 5.200 0 0 1 5.200 5.200V17"/>
<circle cx="5.300" cy="7.700" r="1.900"/>
<path d="M1.500 17v-.800a4 4 0 0 1 4-4h.500"/>
</svg>
<span class="t" style="left:30.9px;top:553px;font-size:12.5px;line-height:16px;color:#d9dce1;transform:scaleX(0.9403);font-weight:700;">Referees and Officials</span>
<svg class="i ns" style="left:184.43px;top:555.72px;color:#d9dce1;" width="11.64" height="10.32" viewBox="0 0 24 24" preserveAspectRatio="none" fill="none" stroke="#d9dce1" stroke-width="1.4" stroke-linecap="round" stroke-linejoin="round">
<path d="M2 6l10 10L22 6"/>
</svg>
<svg class="i ns" style="left:11.69px;top:582.51px;color:#d9dce1;" width="12.72" height="11.87" viewBox="0 0 24 24" preserveAspectRatio="none" fill="none" stroke="#d9dce1" stroke-width="1.3" stroke-linecap="round" stroke-linejoin="round">
<rect x="2" y="6.500" width="20" height="15" rx="1.500"/>
<path d="M8.500 6.500V4a1.500 1.500 0 0 1 1.500-1.500h4A1.500 1.500 0 0 1 15.500 4v2.500"/>
<path d="M2 12h20"/>
<path d="M7.500 12v2.500a1.500 1.500 0 0 0 1.500 1.500h6a1.500 1.500 0 0 0 1.500-1.500V12"/>
</svg>
<span class="t" style="left:30.9px;top:582px;font-size:12.5px;line-height:16px;color:#d9dce1;transform:scaleX(0.9469);font-weight:700;">Disciplinary</span>
<svg class="i ns" style="left:184.43px;top:584.22px;color:#d9dce1;" width="11.64" height="10.32" viewBox="0 0 24 24" preserveAspectRatio="none" fill="none" stroke="#d9dce1" stroke-width="1.4" stroke-linecap="round" stroke-linejoin="round">
<path d="M2 6l10 10L22 6"/>
</svg>
<svg class="i ns" style="left:11.79px;top:610.44px;color:#d9dce1;" width="12.67" height="12.55" viewBox="0 0 24 24" preserveAspectRatio="none" fill="none" stroke="#d9dce1" stroke-width="1.3" stroke-linecap="round" stroke-linejoin="round">
<path d="M2 2.500h9.500l10 10.500a1.500 1.500 0 0 1 0 2L14.500 22a1.500 1.500 0 0 1-2 0L2 11.500z"/>
<circle cx="7" cy="7.500" r="1" fill="currentColor"/>
</svg>
<span class="t" style="left:30.9px;top:610px;font-size:12.5px;line-height:16px;color:#d9dce1;transform:scaleX(0.9624);font-weight:700;">National Teams</span>
<svg class="i ns" style="left:184.43px;top:612.32px;color:#d9dce1;" width="11.64" height="10.32" viewBox="0 0 24 24" preserveAspectRatio="none" fill="none" stroke="#d9dce1" stroke-width="1.4" stroke-linecap="round" stroke-linejoin="round">
<path d="M2 6l10 10L22 6"/>
</svg>
<svg class="i ns" style="left:11.93px;top:639.72px;color:#d9dce1;" width="12.15" height="12.36" viewBox="0 0 24 24" preserveAspectRatio="none" fill="none" stroke="#d9dce1" stroke-width="1.3" stroke-linecap="round" stroke-linejoin="round">
<path d="M4 3.500A1.500 1.500 0 0 1 5.500 2h13A1.500 1.500 0 0 1 20 3.500V22l-8-6.500L4 22z"/>
</svg>
<span class="t" style="left:30.9px;top:639px;font-size:12.5px;line-height:16px;color:#d9dce1;transform:scaleX(0.9385);font-weight:700;">Licence Application</span>
<svg class="i ns" style="left:184.43px;top:641.22px;color:#d9dce1;" width="11.64" height="10.32" viewBox="0 0 24 24" preserveAspectRatio="none" fill="none" stroke="#d9dce1" stroke-width="1.4" stroke-linecap="round" stroke-linejoin="round">
<path d="M2 6l10 10L22 6"/>
</svg>
<svg class="i ns" style="left:11.82px;top:667.74px;color:#d9dce1;" width="12.36" height="11.62" viewBox="0 0 24 24" preserveAspectRatio="none" fill="none" stroke="#d9dce1" stroke-width="1.3" stroke-linecap="round" stroke-linejoin="round">
<path d="M2 11 12 2.500 22 11"/>
<path d="M4.500 9v12.500h15V9"/>
<path d="M9.500 21.500v-8h5v8"/>
</svg>
<span class="t" style="left:30.9px;top:667px;font-size:12.5px;line-height:16px;color:#d9dce1;transform:scaleX(0.9371);font-weight:700;">Organisations</span>
<svg class="i ns" style="left:184.43px;top:669.32px;color:#d9dce1;" width="11.64" height="10.32" viewBox="0 0 24 24" preserveAspectRatio="none" fill="none" stroke="#d9dce1" stroke-width="1.4" stroke-linecap="round" stroke-linejoin="round">
<path d="M2 6l10 10L22 6"/>
</svg>
<svg class="i ns" style="left:11.68px;top:696.44px;color:#d9dce1;" width="12.84" height="12.55" viewBox="0 0 24 24" preserveAspectRatio="none" fill="none" stroke="#d9dce1" stroke-width="1.3" stroke-linecap="round" stroke-linejoin="round">
<path d="M6.500 8.500V4A1.500 1.500 0 0 1 8 2.500h8A1.500 1.500 0 0 1 17.500 4v4.500"/>
<path d="M6.500 17.500H4.500a2.500 2.500 0 0 1-2.500-2.500v-4a2.500 2.500 0 0 1 2.500-2.500h15a2.500 2.500 0 0 1 2.500 2.500v4a2.500 2.500 0 0 1-2.500 2.500h-2"/>
<rect x="6.500" y="12.500" width="11" height="9.500" rx="1"/>
</svg>
<span class="t" style="left:30.9px;top:696px;font-size:12.5px;line-height:16px;color:#d9dce1;transform:scaleX(0.9353);font-weight:700;">Reports and Statistics</span>
<svg class="i ns" style="left:184.43px;top:698.62px;color:#d9dce1;" width="11.64" height="10.32" viewBox="0 0 24 24" preserveAspectRatio="none" fill="none" stroke="#d9dce1" stroke-width="1.4" stroke-linecap="round" stroke-linejoin="round">
<path d="M2 6l10 10L22 6"/>
</svg>
<svg class="i ns" style="left:12.82px;top:724.72px;color:#d9dce1;" width="13.56" height="13.56" viewBox="0 0 24 24" preserveAspectRatio="none" fill="none" stroke="#d9dce1" stroke-width="1.3" stroke-linecap="round" stroke-linejoin="round">
<rect x="2" y="2" width="15.500" height="6" rx="1.500"/>
<path d="M17.500 5h2.500a2 2 0 0 1 2 2v3.500a2 2 0 0 1-2 2h-8.500v3"/>
<rect x="9.500" y="15.500" width="4" height="6.500" rx="2"/>
</svg>
<span class="t" style="left:31.7px;top:724px;font-size:12.5px;line-height:16px;color:#d9dce1;transform:scaleX(0.9477);font-weight:700;">Theme examples</span>
<svg class="i ns" style="left:184.43px;top:726.52px;color:#d9dce1;" width="11.64" height="10.32" viewBox="0 0 24 24" preserveAspectRatio="none" fill="none" stroke="#d9dce1" stroke-width="1.4" stroke-linecap="round" stroke-linejoin="round">
<path d="M2 6l10 10L22 6"/>
</svg>
<svg class="i ns" style="left:11.8px;top:753.72px;color:#d9dce1;" width="12.6" height="12.36" viewBox="0 0 24 24" preserveAspectRatio="none" fill="none" stroke="#d9dce1" stroke-width="1.3" stroke-linecap="round" stroke-linejoin="round">
<rect x="2" y="11" width="20" height="11" rx="2.500"/>
<path d="M6.500 11V7.500a5.500 5.500 0 0 1 11 0V11"/>
</svg>
<span class="t" style="left:30.9px;top:753px;font-size:12.5px;line-height:16px;color:#d9dce1;transform:scaleX(0.9699);font-weight:700;">Administration</span>
<svg class="i ns" style="left:184.43px;top:755.22px;color:#d9dce1;" width="11.64" height="10.32" viewBox="0 0 24 24" preserveAspectRatio="none" fill="none" stroke="#d9dce1" stroke-width="1.4" stroke-linecap="round" stroke-linejoin="round">
<path d="M2 6l10 10L22 6"/>
</svg>
<svg class="i ns" style="left:11.68px;top:781.59px;color:#d9dce1;" width="12.84" height="12.72" viewBox="0 0 24 24" preserveAspectRatio="none" fill="none" stroke="#d9dce1" stroke-width="1.3" stroke-linecap="round" stroke-linejoin="round">
<circle cx="12" cy="12" r="10"/>
<path d="M9.200 9.300a2.900 2.900 0 1 1 4.300 2.500c-1 .6-1.500 1.200-1.500 2.200v.5"/>
<circle cx="12" cy="17.500" r=".7" fill="currentColor"/>
</svg>
<span class="t" style="left:30.9px;top:781px;font-size:12.5px;line-height:16px;color:#d9dce1;transform:scaleX(1.0020);font-weight:700;">Help</span>
<svg class="i ns" style="left:184.43px;top:783.32px;color:#d9dce1;" width="11.64" height="10.32" viewBox="0 0 24 24" preserveAspectRatio="none" fill="none" stroke="#d9dce1" stroke-width="1.4" stroke-linecap="round" stroke-linejoin="round">
<path d="M2 6l10 10L22 6"/>
</svg>
<svg class="i ns" style="left:11.8px;top:810.86px;color:#d9dce1;" width="11.4" height="13.08" viewBox="0 0 24 24" preserveAspectRatio="none" fill="none" stroke="#d9dce1" stroke-width="1.3" stroke-linecap="round" stroke-linejoin="round">
<rect x="2" y="4.500" width="20" height="17.500" rx="1.500"/>
<path d="M7.500 2v2.500"/>
<path d="M16.500 2v2.500"/>
<path d="M12 8.500l1.600 3.300 3.600.500-2.600 2.500.600 3.600-3.200-1.700-3.200 1.700.600-3.600-2.600-2.500 3.600-.500z" fill="currentColor" stroke="none"/>
</svg>
<span class="t" style="left:29.7px;top:810px;font-size:12.5px;line-height:16px;color:#d9dce1;transform:scaleX(0.8999);font-weight:700;">Events</span>
<svg class="i ns" style="left:184.43px;top:812.22px;color:#d9dce1;" width="11.64" height="10.32" viewBox="0 0 24 24" preserveAspectRatio="none" fill="none" stroke="#d9dce1" stroke-width="1.4" stroke-linecap="round" stroke-linejoin="round">
<path d="M2 6l10 10L22 6"/>
</svg>
</nav>
<header>
<div class="b" style="left:208px;top:1px;width:1691px;height:50px;background:#3388da;box-shadow:0 1px 3px rgba(0,0,0,.25);">
</div>
<div class="b" style="left:237px;top:19px;width:20.5px;height:2px;background:#fff;border-radius:1px;">
</div>
<div class="b" style="left:237px;top:25px;width:20.5px;height:2px;background:#fff;border-radius:1px;">
</div>
<div class="b" style="left:237px;top:31px;width:20.5px;height:2px;background:#fff;border-radius:1px;">
</div>
<svg class="i ns" style="left:283.14px;top:20.08px;color:#fff;" width="12.18" height="11.59" viewBox="0 0 24 24" preserveAspectRatio="none" fill="none" stroke="#fff" stroke-width="1.5" stroke-linecap="round" stroke-linejoin="round">
<circle cx="10" cy="10" r="8"/>
<path d="M15.800 15.800 22.500 22.500"/>
</svg>
<span class="t" style="left:303.6px;top:19px;font-size:12.5px;line-height:16px;color:#eef4fb;transform:scaleX(0.8727);font-weight:700;">Search...</span>
<div class="b" style="left:277px;top:39px;width:177px;height:1px;background:#fff;">
</div>
<span class="t" style="left:1698.4px;top:19px;font-size:12px;line-height:16px;color:#fff;transform:scaleX(0.9410);font-weight:700;">CONC</span>
<svg class="i ns" style="left:1756.23px;top:18.98px;color:#fff;" width="14.04" height="13.44" viewBox="0 0 24 24" preserveAspectRatio="none" fill="none" stroke="#fff" stroke-width="2" stroke-linecap="round" stroke-linejoin="round">
<rect x="2" y="2" width="8" height="8" rx="2"/>
<rect x="14" y="2" width="8" height="8" rx="2"/>
<rect x="2" y="14" width="8" height="8" rx="2"/>
<rect x="14" y="14" width="8" height="8" rx="2"/>
</svg>
<svg class="i" style="left:1800.2px;top:18.1px" width="22.4" height="14.9" viewBox="0 0 60 40" preserveAspectRatio="none">
<rect width="60" height="40" fill="#4a5aa8"/>
<path d="M0 0 60 40M60 0 0 40" stroke="#f3f3f8" stroke-width="8"/>
<path d="M0 0 60 40M60 0 0 40" stroke="#ef5a6b" stroke-width="3.500"/>
<path d="M30 0v40M0 20h60" stroke="#f3f3f8" stroke-width="13"/>
<path d="M30 0v40M0 20h60" stroke="#ef5a6b" stroke-width="7.500"/>
</svg>
<svg class="i" style="left:1847px;top:12.800px" width="25.200" height="25.200" viewBox="0 0 50 50">
<defs>
<clipPath id="av">
<circle cx="25" cy="25" r="25"/>
</clipPath>
</defs>
<g clip-path="url(#av)">
<rect width="50" height="50" fill="#9ccfd0"/>
<path d="M25 10C17 10 14.500 16.500 14.500 23.500 14.500 27.500 12.500 29.500 10.500 30.500 13 34 19.500 35 25 35S37 34 39.500 30.500C37.500 29.500 35.500 27.500 35.500 23.500 35.500 16.500 33 10 25 10z" fill="#fad873"/>
<rect x="21.500" y="29" width="7" height="8" fill="#fbd6cc"/>
<ellipse cx="25" cy="24.800" rx="7.300" ry="7.200" fill="#fde1d8"/>
<path d="M17.700 22.500C19.500 17 30.500 17 32.300 22.500 32 14.500 18 14.500 17.700 22.500z" fill="#fad873"/>
<path d="M19.500 22.800h4M26.500 22.800h4" stroke="#b9c4cc" stroke-width="1.300"/>
<path d="M10 51C10 42.500 15 37.800 25 37.800S40 42.500 40 51z" fill="#5b7e8b"/>
<path d="M18.500 37.500 25 45.500 31.500 37.500 28.500 35.800H21.500z" fill="#fafafa"/>
</g>
</svg>
</header>
<div class="b" style="left:0px;top:0px;width:1899px;height:1px;background:#e8e5df;">
</div>
<div class="b" style="left:1899px;top:0px;width:21px;height:942px;background:#f1f1f1;">
</div>
<div class="b" style="left:1899px;top:0px;width:21px;height:1px;background:#dddddd;">
</div>
<div class="b" style="left:1901px;top:267px;width:17px;height:617px;background:#c1c1c1;">
</div>
<div class="b" style="left:1899px;top:0px;width:1px;height:942px;background:#fafafa;">
</div>
<svg class="i" style="left:1905px;top:10px" width="9" height="5" viewBox="0 0 10 6">
<path d="M0 6 5 0l5 6z" fill="#505050"/>
</svg>
<svg class="i" style="left:1905px;top:929px" width="9" height="5" viewBox="0 0 10 6">
<path d="M0 0 5 6l5-6z" fill="#505050"/>
</svg>
</body></html>
